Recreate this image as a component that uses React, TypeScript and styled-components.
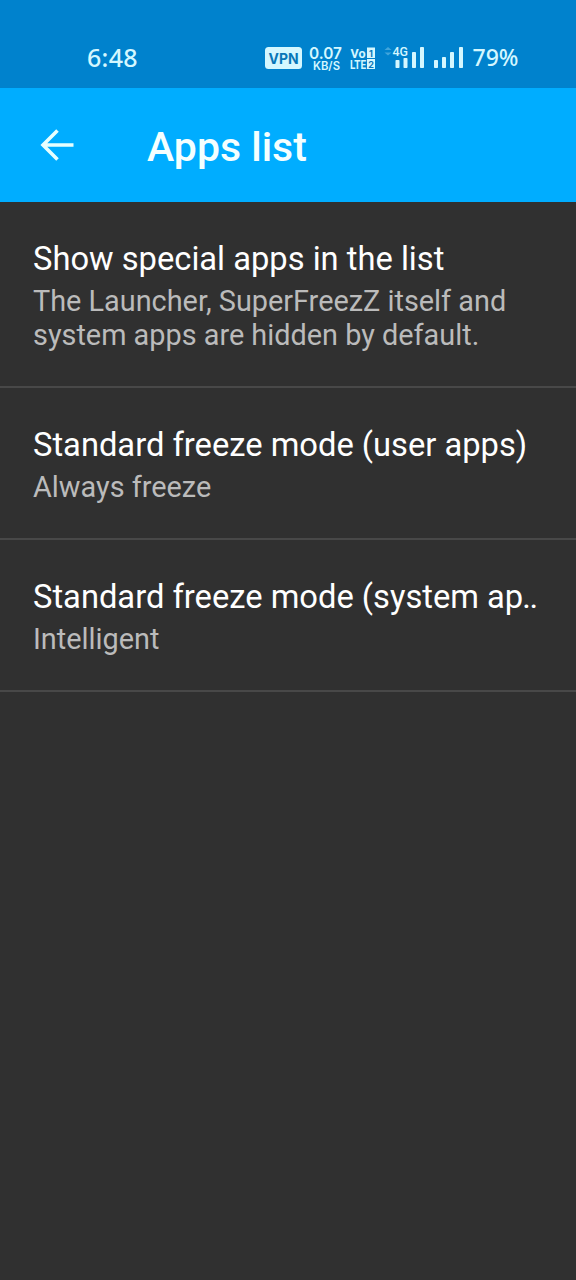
import React from "react";
import styled, { createGlobalStyle } from "styled-components";

const GlobalStyle = createGlobalStyle`
  body {
    margin: 0;
    background: #303030;
    font-family: Roboto, sans-serif;
  }
`;

const Screen = styled.div`
  width: 576px;
  min-height: 1280px;
  background: #303030;
`;

const StatusBar = styled.div`
  box-sizing: border-box;
  height: 88px;
  padding: 28px 54px 0 87px;
  display: flex;
  align-items: center;
  justify-content: space-between;
  background: #0082cd;
  color: #d4f7ff;
`;

const Clock = styled.span`
  margin-bottom: 2px;
  font: 500 25px/32px "Noto Sans", sans-serif;
  letter-spacing: 0.3px;
`;

const StatusIcons = styled.svg`
  display: block;
  width: 258px;
  height: 32px;
  overflow: visible;
  fill: #d4f7ff;
  font-family: Inter, sans-serif;
`;

const AppBar = styled.header`
  box-sizing: border-box;
  height: 114px;
  padding: 0 39px;
  display: flex;
  align-items: center;
  gap: 72px;
  background: #00adff;
  color: #f4ffff;
`;

const BackIcon = styled.svg`
  width: 36px;
  height: 36px;
  fill: none;
  stroke: #e6ffff;
  stroke-width: 3.6;
`;

const Heading = styled.h1`
  margin: 3px 0 0;
  font-size: 41px;
  line-height: 48px;
  font-weight: 500;
`;

const Preference = styled.section`
  padding: 38px 33px 34px;
  border-bottom: 2px solid #484848;
`;

const Title = styled.div`
  font-size: 32.7px;
  line-height: 39px;
  color: #fff;
  white-space: nowrap;
`;

const Dots = styled.span`
  letter-spacing: -1.2px;
  margin-left: -1px;
`;

const Summary = styled.div`
  margin-top: 5px;
  font-size: 28.85px;
  line-height: 34px;
  color: #bbbbbb;
`;

const preferences = [
  {
    title: "Show special apps in the list",
    summary: "The Launcher, SuperFreezZ itself and system apps are hidden by default.",
  },
  { title: "Standard freeze mode (user apps)", summary: "Always freeze" },
  { title: "Standard freeze mode (system ap", truncated: true, summary: "Intelligent" },
];

export default function App() {
  return (
    <Screen>
      <GlobalStyle />
      <StatusBar>
        <Clock>6:48</Clock>
        <StatusIcons viewBox="264 42 258 32">
          <rect x="265" y="47" width="37" height="22" rx="3.5" />
          <text x="268.5" y="63.5" fontSize="14.5" fontWeight="700" fill="#0876b8" textLength="30" lengthAdjust="spacingAndGlyphs">VPN</text>
          <text x="309" y="58.5" fontSize="15.5" fontWeight="600" textLength="33" lengthAdjust="spacingAndGlyphs">0.07</text>
          <text x="313" y="70" fontSize="11.5" fontWeight="600" textLength="27" lengthAdjust="spacingAndGlyphs">KB/S</text>
          <g fontFamily="Roboto, sans-serif" fontWeight="700">
            <text x="350.5" y="57.5" fontSize="13" textLength="15" lengthAdjust="spacingAndGlyphs">Vo</text>
            <text x="350" y="69" fontSize="13" textLength="16" lengthAdjust="spacingAndGlyphs">LTE</text>
          </g>
          <rect x="367" y="47.5" width="8" height="10.5" />
          <rect x="367" y="59" width="8" height="10" />
          <text x="369" y="56.5" fontSize="9" fontWeight="700" fill="#0876b8">1</text>
          <text x="368.3" y="67.5" fontSize="9" fontWeight="700" fill="#0876b8">2</text>
          <path d="M384.5 50l3.5-3 3.5 3zM384.5 52.5h7l-3.500 3z" opacity="0.3" />
          <text x="392.5" y="56" fontFamily="Roboto, sans-serif" fontSize="13.5" fontWeight="500" textLength="15.5" lengthAdjust="spacingAndGlyphs">4G</text>
          <rect x="395.5" y="60" width="4" height="8" rx="0.8" />
          <rect x="403.5" y="58" width="4" height="10" rx="0.8" />
          <rect x="412" y="52" width="4" height="16" rx="0.8" />
          <rect x="420" y="47" width="4" height="21" rx="0.8" />
          <rect x="434" y="60" width="4" height="8" rx="0.8" />
          <rect x="442" y="57" width="4" height="11" rx="0.8" />
          <rect x="450" y="52" width="4" height="16" rx="0.8" />
          <rect x="459" y="47" width="4" height="21" rx="0.8" />
          <text x="472.5" y="66" fontSize="24" fontFamily="'Noto Sans', sans-serif" fontWeight="500" textLength="46" lengthAdjust="spacingAndGlyphs">79%</text>
        </StatusIcons>
      </StatusBar>
      <AppBar>
        <BackIcon viewBox="0 0 36 36">
          <path d="M34.5 18H4.5M18.5 3.5L4 18L18.5 32.5" />
        </BackIcon>
        <Heading>Apps list</Heading>
      </AppBar>
      <main>
        {preferences.map((p) => (
          <Preference key={p.title}>
            <Title>
              {p.title}
              {p.truncated && <Dots>..</Dots>}
            </Title>
            <Summary>{p.summary}</Summary>
          </Preference>
        ))}
      </main>
    </Screen>
  );
}
